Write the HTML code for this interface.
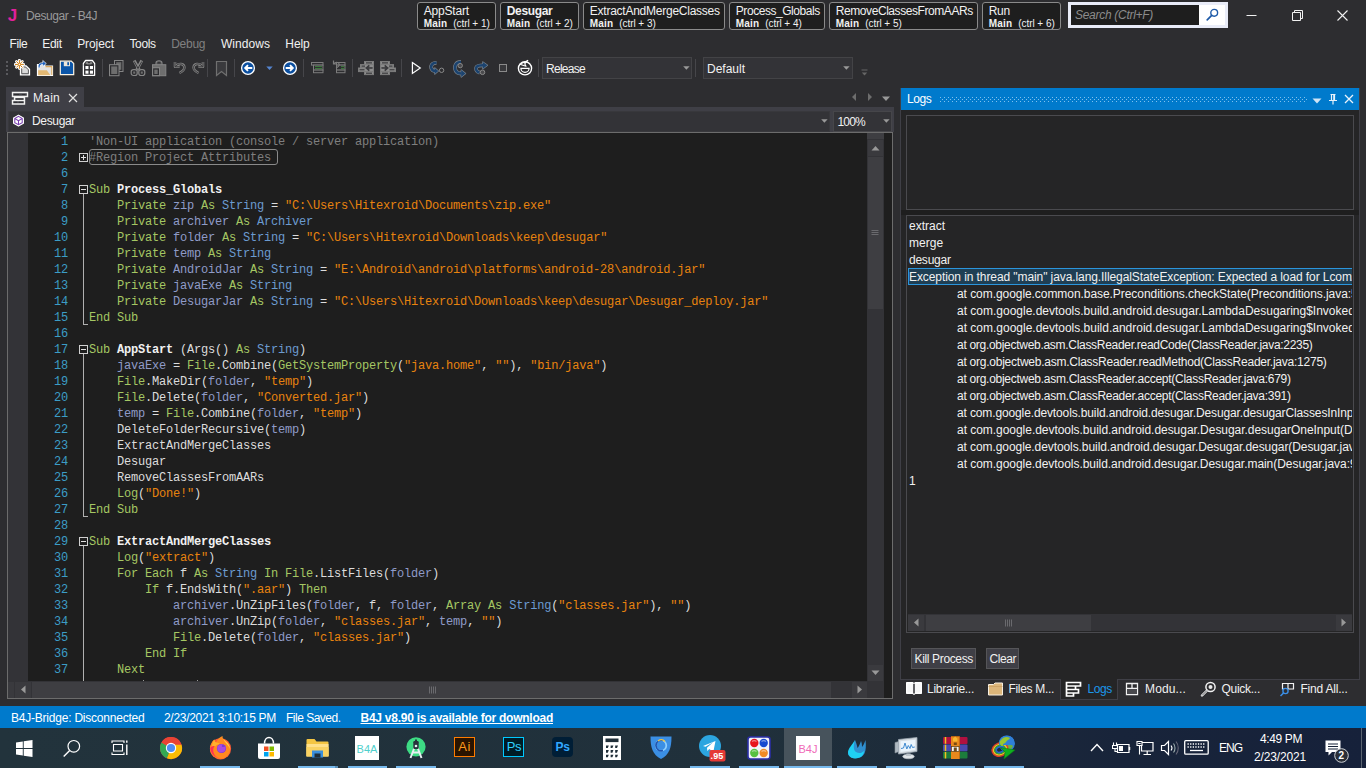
<!DOCTYPE html>
<html><head><meta charset="utf-8"><title>Desugar - B4J</title>
<style>
html,body{margin:0;padding:0;background:#2d2d30;overflow:hidden}
#root{position:relative;width:1366px;height:768px;overflow:hidden;background:#2d2d30;font-family:'Liberation Sans',sans-serif}
.b{position:absolute;display:block}
.t{position:absolute;white-space:pre}
.code{position:absolute;white-space:pre;font:12px/16px 'Liberation Mono',monospace;letter-spacing:-0.2px;color:#dcdcdc}
.k{color:#a5c763}.v{color:#8f9bc8}.ty{color:#6c9bd0}.s{color:#e8830e}.c{color:#7f7f7f}.n{color:#f1f1f1;font-weight:bold}.l{color:#dcdcdc}
.ln{position:absolute;white-space:pre;font:12px/16px 'Liberation Mono',monospace;letter-spacing:-0.2px;color:#3c9dc6;text-align:right}
.lg{position:absolute;white-space:pre;font:12px/17px 'Liberation Sans',sans-serif;color:#f1f1f1;height:17px}
</style></head><body><div id="root">
<div class="t" style="left:7.80px;top:6.50px;height:18px;line-height:18px;font:normal bold 17px/18px 'Liberation Sans', sans-serif;color:#e2219a;letter-spacing:-0.769px;">J</div>
<div class="t" style="left:26.00px;top:7.50px;height:16px;line-height:16px;font:normal normal 12px/16px 'Liberation Sans', sans-serif;color:#999999;letter-spacing:-0.439px;">Desugar - B4J</div>
<div class="b" style="left:417px;top:2px;width:79px;height:28px;background:#1e1e1e;border:1px solid #8a8a8a;box-sizing:border-box;border-radius:3px;"></div>
<div class="t" style="left:423.80px;top:2.50px;height:16px;line-height:16px;font:normal normal 12px/16px 'Liberation Sans', sans-serif;color:#f1f1f1;letter-spacing:-0.213px;">AppStart</div>
<div class="t" style="left:423.80px;top:18.40px;height:12px;line-height:12px;font:normal bold 10px/12px 'Liberation Sans', sans-serif;color:#f1f1f1;letter-spacing:0.155px;">Main</div>
<div class="t" style="left:453.20px;top:18.40px;height:12px;line-height:12px;font:normal normal 10px/12px 'Liberation Sans', sans-serif;color:#f1f1f1;letter-spacing:-0.045px;">(ctrl + 1)</div>
<div class="b" style="left:500px;top:2px;width:79px;height:28px;background:#1e1e1e;border:1px solid #8a8a8a;box-sizing:border-box;border-radius:3px;"></div>
<div class="t" style="left:506.80px;top:2.50px;height:16px;line-height:16px;font:normal bold 12px/16px 'Liberation Sans', sans-serif;color:#f1f1f1;letter-spacing:-0.362px;">Desugar</div>
<div class="t" style="left:506.80px;top:18.40px;height:12px;line-height:12px;font:normal bold 10px/12px 'Liberation Sans', sans-serif;color:#f1f1f1;letter-spacing:0.155px;">Main</div>
<div class="t" style="left:536.20px;top:18.40px;height:12px;line-height:12px;font:normal normal 10px/12px 'Liberation Sans', sans-serif;color:#f1f1f1;letter-spacing:-0.045px;">(ctrl + 2)</div>
<div class="b" style="left:583px;top:2px;width:142px;height:28px;background:#1e1e1e;border:1px solid #8a8a8a;box-sizing:border-box;border-radius:3px;"></div>
<div class="t" style="left:589.80px;top:2.50px;height:16px;line-height:16px;font:normal normal 12px/16px 'Liberation Sans', sans-serif;color:#f1f1f1;letter-spacing:-0.245px;">ExtractAndMergeClasses</div>
<div class="t" style="left:589.80px;top:18.40px;height:12px;line-height:12px;font:normal bold 10px/12px 'Liberation Sans', sans-serif;color:#f1f1f1;letter-spacing:0.155px;">Main</div>
<div class="t" style="left:619.20px;top:18.40px;height:12px;line-height:12px;font:normal normal 10px/12px 'Liberation Sans', sans-serif;color:#f1f1f1;letter-spacing:-0.045px;">(ctrl + 3)</div>
<div class="b" style="left:729px;top:2px;width:96px;height:28px;background:#1e1e1e;border:1px solid #8a8a8a;box-sizing:border-box;border-radius:3px;"></div>
<div class="t" style="left:735.80px;top:2.50px;height:16px;line-height:16px;font:normal normal 12px/16px 'Liberation Sans', sans-serif;color:#f1f1f1;letter-spacing:-0.448px;">Process_Globals</div>
<div class="t" style="left:735.80px;top:18.40px;height:12px;line-height:12px;font:normal bold 10px/12px 'Liberation Sans', sans-serif;color:#f1f1f1;letter-spacing:0.155px;">Main</div>
<div class="t" style="left:765.20px;top:18.40px;height:12px;line-height:12px;font:normal normal 10px/12px 'Liberation Sans', sans-serif;color:#f1f1f1;letter-spacing:-0.045px;">(ctrl + 4)</div>
<div class="b" style="left:829px;top:2px;width:149px;height:28px;background:#1e1e1e;border:1px solid #8a8a8a;box-sizing:border-box;border-radius:3px;"></div>
<div class="t" style="left:835.80px;top:2.50px;height:16px;line-height:16px;font:normal normal 12px/16px 'Liberation Sans', sans-serif;color:#f1f1f1;letter-spacing:-0.431px;">RemoveClassesFromAARs</div>
<div class="t" style="left:835.80px;top:18.40px;height:12px;line-height:12px;font:normal bold 10px/12px 'Liberation Sans', sans-serif;color:#f1f1f1;letter-spacing:0.155px;">Main</div>
<div class="t" style="left:865.20px;top:18.40px;height:12px;line-height:12px;font:normal normal 10px/12px 'Liberation Sans', sans-serif;color:#f1f1f1;letter-spacing:-0.045px;">(ctrl + 5)</div>
<div class="b" style="left:982px;top:2px;width:79px;height:28px;background:#1e1e1e;border:1px solid #8a8a8a;box-sizing:border-box;border-radius:3px;"></div>
<div class="t" style="left:988.80px;top:2.50px;height:16px;line-height:16px;font:normal normal 12px/16px 'Liberation Sans', sans-serif;color:#f1f1f1;letter-spacing:-0.339px;">Run</div>
<div class="t" style="left:988.80px;top:18.40px;height:12px;line-height:12px;font:normal bold 10px/12px 'Liberation Sans', sans-serif;color:#f1f1f1;letter-spacing:0.155px;">Main</div>
<div class="t" style="left:1018.20px;top:18.40px;height:12px;line-height:12px;font:normal normal 10px/12px 'Liberation Sans', sans-serif;color:#f1f1f1;letter-spacing:-0.045px;">(ctrl + 6)</div>
<div class="b" style="left:1068px;top:2px;width:160px;height:26px;background:#e9ecf8;"></div>
<div class="b" style="left:1071px;top:5px;width:128px;height:20px;background:#1e1e1e;"></div>
<div class="b" style="left:1199px;top:5px;width:26px;height:20px;background:#ffffff;"></div>
<div class="t" style="left:1075.00px;top:7.00px;height:16px;line-height:16px;font:italic normal 12px/16px 'Liberation Sans', sans-serif;color:#8c8c8c;letter-spacing:-0.291px;">Search (Ctrl+F)</div>
<svg class="b" style="left:1204px;top:7px" width="16" height="16" viewBox="0 0 16 16"><circle cx="10.2" cy="5.800" r="3.400" fill="none" stroke="#1e5aa8" stroke-width="1.400"/><path d="M7.700 8.300 L3.200 12.800" stroke="#1e5aa8" stroke-width="1.700" stroke-linecap="round"/></svg>
<svg class="b" style="left:1240px;top:4px" width="120" height="24" viewBox="0 0 120 24"><path d="M6.5 11.5h10" stroke="#f1f1f1" stroke-width="1"/><path d="M52.5 8.5h8v8h-8z M54.5 8.5v-2h8v8h-2" fill="none" stroke="#f1f1f1" stroke-width="1"/><path d="M97.5 6.5l10 10M107.5 6.5l-10 10" stroke="#f1f1f1" stroke-width="1.1"/></svg>
<div class="t" style="left:9.50px;top:36.00px;height:16px;line-height:16px;font:normal normal 12px/16px 'Liberation Sans', sans-serif;color:#f1f1f1;letter-spacing:-0.386px;">File</div>
<div class="t" style="left:42.30px;top:36.00px;height:16px;line-height:16px;font:normal normal 12px/16px 'Liberation Sans', sans-serif;color:#f1f1f1;letter-spacing:-0.322px;">Edit</div>
<div class="t" style="left:77.20px;top:36.00px;height:16px;line-height:16px;font:normal normal 12px/16px 'Liberation Sans', sans-serif;color:#f1f1f1;letter-spacing:-0.080px;">Project</div>
<div class="t" style="left:129.40px;top:36.00px;height:16px;line-height:16px;font:normal normal 12px/16px 'Liberation Sans', sans-serif;color:#f1f1f1;letter-spacing:-0.323px;">Tools</div>
<div class="t" style="left:171.20px;top:36.00px;height:16px;line-height:16px;font:normal normal 12px/16px 'Liberation Sans', sans-serif;color:#808080;letter-spacing:-0.255px;">Debug</div>
<div class="t" style="left:221.00px;top:36.00px;height:16px;line-height:16px;font:normal normal 12px/16px 'Liberation Sans', sans-serif;color:#f1f1f1;letter-spacing:0.045px;">Windows</div>
<div class="t" style="left:285.30px;top:36.00px;height:16px;line-height:16px;font:normal normal 12px/16px 'Liberation Sans', sans-serif;color:#f1f1f1;letter-spacing:-0.072px;">Help</div>
<svg class="b" style="left:5px;top:60px" width="4" height="16" viewBox="0 0 4 16"><rect x="1" y="1" width="2" height="2" fill="#5a5a5e"/><rect x="1" y="5" width="2" height="2" fill="#5a5a5e"/><rect x="1" y="9" width="2" height="2" fill="#5a5a5e"/><rect x="1" y="13" width="2" height="2" fill="#5a5a5e"/></svg>
<svg class="b" style="left:14px;top:59px" width="18" height="18" viewBox="0 0 18 18"><path d="M6.500 6.800h5.600l3.400 3.400v5.600h-9z" fill="#d9d9d9" stroke="#ffffff" stroke-width="1.300"/><path d="M7.700 8h3.900l2.800 2.800v3.900h-6.700z" fill="none" stroke="#3a3a3d" stroke-width="0.800"/><path d="M5.400 1.200v8.400M1.200 5.400h8.400M2.500 2.500l5.800 5.800M8.300 2.500l-5.800 5.800" stroke="#ffffff" stroke-width="2.800" stroke-linecap="round"/><path d="M5.400 1v8.800M1 5.400h8.800M2.300 2.300l6.200 6.200M8.500 2.300l-6.200 6.200" stroke="#cf7f14" stroke-width="1"/><circle cx="5.400" cy="5.400" r="1.200" fill="#ffffff" stroke="#cf7f14" stroke-width="0.800"/></svg>
<svg class="b" style="left:36px;top:59px" width="18" height="18" viewBox="0 0 18 18"><path d="M1.500 5.500h6l1.500 1.500h7.500v9.300h-15z" fill="#e2e2e2" stroke="#ffffff" stroke-width="1.200"/><path d="M9.500 7.600h6.300v8.500" fill="none" stroke="#dba95c" stroke-width="1.100"/><path d="M2.200 16.200v-5h8.600l3.700 5z" fill="#e3b873"/><path d="M2.600 9.200C1.200 6.200 3 3.500 6.800 3.800V1.500l3.500 3-3.500 3V5.600C4.800 5.300 3.600 6.500 4.200 8.600z" fill="#1a5fbf" stroke="#ffffff" stroke-width="0.700"/></svg>
<svg class="b" style="left:59px;top:60px" width="16" height="16" viewBox="0 0 16 16"><path d="M1.300 1.200h11l2.400 2.400v11h-13.400z" fill="#0b55a8" stroke="#fbf3e4" stroke-width="1.200"/><rect x="4.800" y="1.600" width="6.200" height="4.600" fill="#ece6da"/><rect x="8.300" y="2.200" width="1.700" height="3" fill="#0b55a8"/></svg>
<svg class="b" style="left:82px;top:59px" width="14" height="18" viewBox="0 0 14 18"><path d="M1.400 16.300v-12l2.200-2.800h6.800l2.200 2.800v12z" fill="#2d2d30" stroke="#ffffff" stroke-width="1.300" stroke-linejoin="round"/><path d="M7 5.200C5.500 2.500 3.500 2.800 4 4.500 4.300 5.300 5.800 5.400 7 5.200C8.500 2.500 10.500 2.800 10 4.500 9.700 5.300 8.200 5.400 7 5.200z" fill="#8f8f8f" stroke="#8f8f8f" stroke-width="0.600"/><path d="M1.500 6h11" stroke="#3a3a3d" stroke-width="0.600"/><g fill="#ffffff"><rect x="3.400" y="7" width="3.100" height="3.100"/><rect x="7.900" y="7" width="3.100" height="3.100"/><rect x="3.400" y="11.600" width="3.100" height="3.100"/><rect x="7.900" y="11.600" width="3.100" height="3.100"/></g></svg>
<div class="b" style="left:102px;top:59px;width:1px;height:18px;background:#46464a;"></div>
<svg class="b" style="left:108px;top:59px" width="16" height="18" viewBox="0 0 16 18"><rect x="6.500" y="1.500" width="8.500" height="11" fill="#2d2d30" stroke="#858585" stroke-width="1"/><rect x="8.200" y="3.200" width="5.100" height="7.600" fill="#6e6e6e"/><rect x="1.500" y="5.700" width="9.500" height="11" fill="#2d2d30" stroke="#858585" stroke-width="1"/><rect x="3.200" y="7.400" width="6.100" height="7.600" fill="#6e6e6e"/></svg>
<svg class="b" style="left:130px;top:59px" width="16" height="18" viewBox="0 0 16 18"><path d="M4.200 1.500L9.300 11M11.800 1.500L6.700 11" stroke="#858585" stroke-width="3" stroke-linecap="butt"/><path d="M4.200 2.500L9 11M11.800 2.500L7 11" stroke="#2d2d30" stroke-width="0.900"/><rect x="1.200" y="10.600" width="6" height="5.900" rx="2.200" fill="#2d2d30" stroke="#858585" stroke-width="1.200"/><rect x="8.800" y="10.600" width="6" height="5.900" rx="2.200" fill="#2d2d30" stroke="#858585" stroke-width="1.200"/><rect x="3.200" y="12.500" width="2" height="2.200" fill="#6e6e6e"/><rect x="10.800" y="12.500" width="2" height="2.200" fill="#6e6e6e"/><rect x="7.200" y="9.500" width="1.600" height="1.600" fill="#858585"/></svg>
<svg class="b" style="left:151px;top:59px" width="16" height="18" viewBox="0 0 16 18"><path d="M5 6V4Q5 1.700 8 1.700Q11 1.700 11 4V6" fill="#4a4a4c" stroke="#858585" stroke-width="1.100"/><rect x="1.500" y="5.700" width="13.300" height="11" fill="#6e6e6e" stroke="#858585" stroke-width="1"/><rect x="2.200" y="9.200" width="6.300" height="7" fill="#2d2d30"/><rect x="1.500" y="8.700" width="7" height="8" fill="none" stroke="#858585" stroke-width="1"/><rect x="3.300" y="10.600" width="3.400" height="4.400" fill="#6e6e6e"/><rect x="7.300" y="3" width="1.400" height="1.400" fill="#2d2d30"/></svg>
<svg class="b" style="left:173px;top:61px" width="14" height="14" viewBox="0 0 14 14"><path d="M2 1v4.800h4.600M2.600 5.300C5.800 1.400 11.400 2.600 11.400 6.600c0 2.900-2.600 4.200-5 5.400" fill="none" stroke="#858585" stroke-width="2.500" stroke-linejoin="round"/><path d="M2 1v4.800h4.600M2.600 5.300C5.800 1.400 11.400 2.600 11.400 6.600c0 2.900-2.600 4.200-5 5.400" fill="none" stroke="#2d2d30" stroke-width="0.900"/></svg>
<svg class="b" style="left:191px;top:61px" width="14" height="14" viewBox="0 0 14 14"><path d="M12 1v4.800H7.400M11.400 5.300C8.200 1.400 2.600 2.600 2.600 6.600c0 2.900 2.600 4.200 5 5.400" fill="none" stroke="#858585" stroke-width="2.500" stroke-linejoin="round"/><path d="M12 1v4.800H7.400M11.400 5.300C8.200 1.400 2.600 2.600 2.600 6.600c0 2.900 2.600 4.200 5 5.400" fill="none" stroke="#2d2d30" stroke-width="0.900"/></svg>
<div class="b" style="left:207px;top:59px;width:1px;height:18px;background:#46464a;"></div>
<svg class="b" style="left:215px;top:60px" width="14" height="17" viewBox="0 0 14 17"><path d="M1.5 1.5h10v14l-5-4-5 4z" fill="#3a3a3d" stroke="#707070" stroke-width="1.2"/></svg>
<div class="b" style="left:234px;top:59px;width:1px;height:18px;background:#46464a;"></div>
<svg class="b" style="left:240px;top:60px" width="16" height="16" viewBox="0 0 16 16"><circle cx="8" cy="8" r="6.400" fill="#0b4fa0" stroke="#ffffff" stroke-width="1.300"/><path d="M12.300 8H5.500M8 5.200L5.200 8l2.800 2.800" fill="none" stroke="#fff" stroke-width="1.900"/></svg>
<svg class="b" style="left:266px;top:65.5px" width="7" height="5" viewBox="0 0 7 5"><path d="M0.300 0.500h6.400l-3.200 3.600z" fill="#5585d0"/></svg>
<svg class="b" style="left:282px;top:60px" width="16" height="16" viewBox="0 0 16 16"><circle cx="8" cy="8" r="6.400" fill="#0b4fa0" stroke="#ffffff" stroke-width="1.300"/><path d="M3.700 8h6.800M8 5.200L10.800 8 8 10.800" fill="none" stroke="#fff" stroke-width="1.900"/></svg>
<div class="b" style="left:303px;top:59px;width:1px;height:18px;background:#46464a;"></div>
<svg class="b" style="left:310px;top:61px" width="14" height="13" viewBox="0 0 14 13"><g fill="#2d2d30" stroke="#7c7c7c" stroke-width="1"><rect x="1.500" y="1.500" width="11.500" height="2.600"/><rect x="3.500" y="4.100" width="9.500" height="5"/><rect x="3.500" y="9.100" width="9.500" height="2.600"/></g><path d="M5 5.600h7M5 7.600h7" stroke="#3f7f3f" stroke-width="1"/></svg>
<svg class="b" style="left:332px;top:60px" width="14" height="14" viewBox="0 0 14 14"><g fill="#2d2d30" stroke="#7c7c7c" stroke-width="1"><rect x="4.500" y="2.500" width="8.500" height="2.600"/><rect x="4.500" y="5.100" width="8.500" height="5"/><rect x="4.500" y="10.100" width="8.500" height="2.600"/></g><path d="M9 6.600h3.500M9 8.600h3.500" stroke="#3f7f3f" stroke-width="1"/><path d="M1.500 0.500v3.500h3.500M1.800 3.800c2-2.300 5.500-1.500 5.500 1 0 1.600-1.600 2.400-3.300 3.400" fill="none" stroke="#7c7c7c" stroke-width="1.200"/></svg>
<div class="b" style="left:352px;top:59px;width:1px;height:18px;background:#46464a;"></div>
<svg class="b" style="left:357px;top:60px" width="18" height="16" viewBox="0 0 18 16"><g fill="#8c8c8c" stroke="#7c7c7c" stroke-width="1"><rect x="7.500" y="1.500" width="9" height="2.800"/><rect x="3.500" y="4.600" width="13" height="3"/><rect x="1.500" y="8" width="15" height="3.600"/><rect x="7.500" y="11.800" width="9" height="2.800"/></g><path d="M9 2.900h6M4.500 6.100h3.500M2.500 9.800h5M9 13.200h6" stroke="#2d2d30" stroke-width="1"/><path d="M15.500 8H10M12.300 5.300L9.500 8l2.800 2.700" fill="none" stroke="#3a3a3d" stroke-width="1.700"/></svg>
<svg class="b" style="left:379px;top:60px" width="18" height="16" viewBox="0 0 18 16"><g fill="#8c8c8c" stroke="#7c7c7c" stroke-width="1"><rect x="1.500" y="1.500" width="9" height="2.800"/><rect x="1.500" y="4.600" width="13" height="3"/><rect x="1.500" y="8" width="15" height="3.600"/><rect x="1.500" y="11.800" width="9" height="2.800"/></g><path d="M3 2.900h6M10 6.100h3.500M10.500 9.800h5M3 13.200h6" stroke="#2d2d30" stroke-width="1"/><path d="M2.500 8H8M5.700 5.300L8.500 8l-2.800 2.700" fill="none" stroke="#3a3a3d" stroke-width="1.700"/></svg>
<div class="b" style="left:401px;top:59px;width:1px;height:18px;background:#46464a;"></div>
<svg class="b" style="left:411px;top:61px" width="12" height="14" viewBox="0 0 12 14"><path d="M1.400 1.600L9.300 7 1.400 12.400z" fill="#3a3a3d" stroke="#ffffff" stroke-width="1.200" stroke-linejoin="miter"/></svg>
<svg class="b" style="left:428px;top:60px" width="18" height="16" viewBox="0 0 18 16"><path d="M8.500 2.800C3.500 2.800 2.800 6 3.200 7.800C3.800 10.200 5.500 11 7.200 11" fill="none" stroke="#7b848c" stroke-width="3.800"/><path d="M6.800 7.900L10.300 11 6.800 14.100z" fill="#7b848c" stroke="#7b848c" stroke-width="1.200" stroke-linejoin="round"/><path d="M8.500 2.800C3.500 2.800 2.800 6 3.200 7.800C3.800 10.200 5.500 11 7.200 11" fill="none" stroke="#1b436f" stroke-width="2.600"/><path d="M6.800 7.900L10.300 11 6.800 14.100z" fill="#1b436f"/><circle cx="13.600" cy="10.300" r="2.200" fill="#2d2d30" stroke="#8a8a8a" stroke-width="1"/></svg>
<svg class="b" style="left:452px;top:59px" width="16" height="19" viewBox="0 0 16 19"><path d="M9 3C3.500 3 2.800 7 3 9.500C3.500 13 6.500 14.500 9.500 14.500" fill="none" stroke="#7b848c" stroke-width="3.800"/><path d="M9.200 11L13.600 14.500 9.200 18z" fill="#7b848c" stroke="#7b848c" stroke-width="1.200" stroke-linejoin="round"/><path d="M9 3C3.500 3 2.800 7 3 9.500C3.500 13 6.500 14.500 9.500 14.500" fill="none" stroke="#1b436f" stroke-width="2.600"/><path d="M9.200 11L13.600 14.500 9.200 18z" fill="#1b436f"/><circle cx="8.200" cy="6.600" r="2.200" fill="#4a4a4d" stroke="#8a8a8a" stroke-width="1"/></svg>
<svg class="b" style="left:473px;top:60px" width="17" height="17" viewBox="0 0 17 17"><path d="M6.500 12.500C3 12 2.500 8.500 3.500 7C4.500 5.500 7 5.300 10 5.300" fill="none" stroke="#7b848c" stroke-width="3.800"/><path d="M9.800 1.900L14.500 5.300 9.800 8.700z" fill="#7b848c" stroke="#7b848c" stroke-width="1.200" stroke-linejoin="round"/><path d="M6.500 12.500C3 12 2.500 8.500 3.500 7C4.500 5.500 7 5.300 10 5.300" fill="none" stroke="#1b436f" stroke-width="2.600"/><path d="M9.800 1.900L14.500 5.300 9.800 8.700z" fill="#1b436f"/><circle cx="9.500" cy="12.300" r="2.300" fill="#4a4a4d" stroke="#8a8a8a" stroke-width="1"/></svg>
<div class="b" style="left:499px;top:64px;width:8px;height:8px;background:#38383b;border:1px solid #8a8a8a;box-sizing:border-box;"></div>
<svg class="b" style="left:516px;top:58.4px" width="18" height="19" viewBox="0 0 18 19"><circle cx="9" cy="10.300" r="6.600" fill="none" stroke="#ffffff" stroke-width="1.400"/><path d="M4.900 10.300h8.200a4.100 4.100 0 0 1-8.200 0z" fill="#2d2d30" stroke="#ffffff" stroke-width="1.200"/><path d="M11.800 2.400L3.800 6.200l6.200 2.100-1.300-2.500z" fill="#3a3a3d" stroke="#ffffff" stroke-width="1.100" stroke-linejoin="round"/></svg>
<div class="b" style="left:538px;top:59px;width:1px;height:18px;background:#46464a;"></div>
<div class="b" style="left:542px;top:57px;width:150px;height:22px;background:#333337;border:1px solid #434346;box-sizing:border-box;"></div>
<div class="t" style="left:546.00px;top:61.30px;height:16px;line-height:16px;font:normal normal 12px/16px 'Liberation Sans', sans-serif;color:#f1f1f1;letter-spacing:-0.719px;">Release</div>
<svg class="b" style="left:683px;top:66px" width="7" height="4" viewBox="0 0 7 4"><path d="M0.200 0.200h6.400l-3.200 3.600z" fill="#999"/></svg>
<div class="b" style="left:695px;top:59px;width:1px;height:18px;background:#46464a;"></div>
<div class="b" style="left:703px;top:57px;width:150px;height:22px;background:#333337;border:1px solid #434346;box-sizing:border-box;"></div>
<div class="t" style="left:707.00px;top:61.30px;height:16px;line-height:16px;font:normal normal 12px/16px 'Liberation Sans', sans-serif;color:#f1f1f1;letter-spacing:-0.004px;">Default</div>
<svg class="b" style="left:843px;top:66px" width="7" height="4" viewBox="0 0 7 4"><path d="M0.200 0.200h6.400l-3.200 3.600z" fill="#999"/></svg>
<svg class="b" style="left:861px;top:69px" width="7" height="7" viewBox="0 0 7 7"><path d="M0.500 1h6" stroke="#666" stroke-width="1"/><path d="M0.800 3.500h5.400l-2.700 3z" fill="#666"/></svg>
<div class="b" style="left:6px;top:87px;width:78px;height:21px;background:#3f3f46;"></div>
<div class="b" style="left:6px;top:107px;width:888px;height:25px;background:#3f3f46;"></div>
<div class="b" style="left:894px;top:107px;width:0px;height:0px;"></div>
<div class="t" style="left:33.00px;top:89.50px;height:16px;line-height:16px;font:normal normal 12px/16px 'Liberation Sans', sans-serif;color:#f1f1f1;letter-spacing:0.246px;">Main</div>
<svg class="b" style="left:11px;top:91px" width="18" height="14" viewBox="0 0 18 14"><path d="M1.5 1.5h15v4h-15z M3.5 5.5v3 M3.5 6.5h10v3h-10z M1.5 9.5h12v3.5h-12z" fill="none" stroke="#f1f1f1" stroke-width="1.4"/><path d="M3 3.5h5 M11 3.5h3 M5 8h7 M3 11.3h3 M8 11.3h4" stroke="#2d2d30" stroke-width="1"/></svg>
<svg class="b" style="left:68px;top:93px" width="10" height="10" viewBox="0 0 10 10"><path d="M1 1l8 8M9 1l-8 8" stroke="#e0e0e0" stroke-width="1.2"/></svg>
<svg class="b" style="left:850px;top:91px" width="42" height="12" viewBox="0 0 42 12"><path d="M6 2v8l-4-4z" fill="#6d6d6d"/><path d="M18 2v8l4-4z" fill="#6d6d6d"/><path d="M32 5.5h8l-4 4.5z" fill="#999"/></svg>
<div class="b" style="left:8px;top:111px;width:822px;height:21px;background:#333337;border:1px solid #38383c;box-sizing:border-box;"></div>
<div class="b" style="left:833px;top:111px;width:59px;height:21px;background:#333337;border:1px solid #46464a;box-sizing:border-box;"></div>
<div class="t" style="left:32.00px;top:113.00px;height:16px;line-height:16px;font:normal normal 12px/16px 'Liberation Sans', sans-serif;color:#f1f1f1;letter-spacing:-0.337px;">Desugar</div>
<svg class="b" style="left:12px;top:114.3px" width="13" height="13" viewBox="0 0 14 14"><path d="M7 1.2l5.3 3v5.8L7 13l-5.3-3V4.2z" fill="#ffffff" stroke="#ffffff" stroke-width="1.2" stroke-linejoin="round"/><path d="M7 2.6l4 2.3v4.4L7 11.6 3 9.3V4.9z M7 7.2v4.2 M7 7.2L3.2 5 M7 7.2L10.8 5" fill="none" stroke="#7a3fb0" stroke-width="1.1"/></svg>
<svg class="b" style="left:821px;top:119px" width="7" height="4" viewBox="0 0 7 4"><path d="M0.200 0.200h6.400l-3.200 3.600z" fill="#999"/></svg>
<svg class="b" style="left:883px;top:119px" width="7" height="4" viewBox="0 0 7 4"><path d="M0.200 0.200h6.400l-3.200 3.600z" fill="#999"/></svg>
<div class="t" style="left:837.50px;top:114.20px;height:16px;line-height:16px;font:normal normal 12px/16px 'Liberation Sans', sans-serif;color:#f1f1f1;letter-spacing:-0.801px;">100%</div>
<div class="b" style="left:7px;top:132px;width:886px;height:567px;background:#1e1e1e;border:1px solid #6c6c6c;box-sizing:border-box;"></div>
<div class="b" style="left:8px;top:133px;width:20px;height:548px;background:#333337;"></div>
<div class="b" style="left:867px;top:133px;width:17px;height:548px;background:#333337;"></div>
<div class="b" style="left:867px;top:133px;width:17px;height:6px;background:#3e3e42;"></div>
<div class="b" style="left:868px;top:140px;width:15px;height:16px;background:#3a3a3e;"></div>
<svg class="b" style="left:871px;top:145px" width="10" height="6" viewBox="0 0 10 6"><path d="M0.500 5.500h8l-4-4.500z" fill="#999"/></svg>
<div class="b" style="left:868px;top:157px;width:15px;height:152px;background:#3e3e42;"></div>
<svg class="b" style="left:871px;top:229px" width="9" height="8" viewBox="0 0 9 8"><path d="M0.500 1.500h7M0.500 3.500h7M0.500 5.500h7" stroke="#6a6a6e" stroke-width="1"/></svg>
<div class="b" style="left:868px;top:665px;width:15px;height:16px;background:#3a3a3e;"></div>
<svg class="b" style="left:871px;top:670px" width="10" height="6" viewBox="0 0 10 6"><path d="M0.500 0.500h8l-4 4.500z" fill="#999"/></svg>
<div class="b" style="left:8px;top:681px;width:876px;height:17px;background:#333337;"></div>
<div class="b" style="left:8px;top:682px;width:6px;height:16px;background:#3a3a3e;"></div>
<div class="b" style="left:15px;top:682px;width:16px;height:16px;background:#3a3a3e;"></div>
<svg class="b" style="left:20px;top:685px" width="6" height="10" viewBox="0 0 6 10"><path d="M5.500 0.500v8l-4.500-4z" fill="#999"/></svg>
<div class="b" style="left:32px;top:682px;width:799px;height:16px;background:#3e3e42;"></div>
<svg class="b" style="left:428px;top:686px" width="9" height="8" viewBox="0 0 9 8"><path d="M1.500 0.500v7M3.500 0.500v7M5.500 0.500v7M7.500 0.500v7" stroke="#6a6a6e" stroke-width="1"/></svg>
<div class="b" style="left:852px;top:682px;width:15px;height:16px;background:#3a3a3e;"></div>
<svg class="b" style="left:857px;top:685px" width="6" height="10" viewBox="0 0 6 10"><path d="M0.500 0.500v8l4.500-4z" fill="#999"/></svg>
<div class="b" style="left:8px;top:133px;width:859px;height:548px;overflow:hidden;"><div class="ln" style="left:0;width:60px;top:1px">1</div><div class="code" style="left:81px;top:1px"><span class="c">'Non-UI application (console / server application)</span></div><div class="ln" style="left:0;width:60px;top:17px">2</div><div class="code" style="left:81px;top:17px"><span class="c">#Region Project Attributes </span></div><div class="ln" style="left:0;width:60px;top:33px">6</div><div class="ln" style="left:0;width:60px;top:49px">7</div><div class="code" style="left:81px;top:49px"><span class="k">Sub </span><span class="n">Process_Globals</span></div><div class="ln" style="left:0;width:60px;top:65px">8</div><div class="code" style="left:81px;top:65px"><span class="k">    Private </span><span class="v">zip </span><span class="k">As </span><span class="ty">String </span><span class="l">= </span><span class="s">"C:\Users\Hitexroid\Documents\zip.exe"</span></div><div class="ln" style="left:0;width:60px;top:81px">9</div><div class="code" style="left:81px;top:81px"><span class="k">    Private </span><span class="v">archiver </span><span class="k">As </span><span class="ty">Archiver</span></div><div class="ln" style="left:0;width:60px;top:97px">10</div><div class="code" style="left:81px;top:97px"><span class="k">    Private </span><span class="v">folder </span><span class="k">As </span><span class="ty">String </span><span class="l">= </span><span class="s">"C:\Users\Hitexroid\Downloads\keep\desugar"</span></div><div class="ln" style="left:0;width:60px;top:113px">11</div><div class="code" style="left:81px;top:113px"><span class="k">    Private </span><span class="v">temp </span><span class="k">As </span><span class="ty">String</span></div><div class="ln" style="left:0;width:60px;top:129px">12</div><div class="code" style="left:81px;top:129px"><span class="k">    Private </span><span class="v">AndroidJar </span><span class="k">As </span><span class="ty">String </span><span class="l">= </span><span class="s">"E:\Android\android\platforms\android-28\android.jar"</span></div><div class="ln" style="left:0;width:60px;top:145px">13</div><div class="code" style="left:81px;top:145px"><span class="k">    Private </span><span class="v">javaExe </span><span class="k">As </span><span class="ty">String</span></div><div class="ln" style="left:0;width:60px;top:161px">14</div><div class="code" style="left:81px;top:161px"><span class="k">    Private </span><span class="v">DesugarJar </span><span class="k">As </span><span class="ty">String </span><span class="l">= </span><span class="s">"C:\Users\Hitexroid\Downloads\keep\desugar\Desugar_deploy.jar"</span></div><div class="ln" style="left:0;width:60px;top:177px">15</div><div class="code" style="left:81px;top:177px"><span class="k">End Sub</span></div><div class="ln" style="left:0;width:60px;top:193px">16</div><div class="ln" style="left:0;width:60px;top:209px">17</div><div class="code" style="left:81px;top:209px"><span class="k">Sub </span><span class="n">AppStart </span><span class="l">(Args() </span><span class="k">As </span><span class="ty">String</span><span class="l">)</span></div><div class="ln" style="left:0;width:60px;top:225px">18</div><div class="code" style="left:81px;top:225px"><span class="v">    javaExe </span><span class="l">= </span><span class="k">File</span><span class="l">.Combine(</span><span class="k">GetSystemProperty</span><span class="l">(</span><span class="s">"java.home"</span><span class="l">, </span><span class="s">""</span><span class="l">), </span><span class="s">"bin/java"</span><span class="l">)</span></div><div class="ln" style="left:0;width:60px;top:241px">19</div><div class="code" style="left:81px;top:241px"><span class="k">    File</span><span class="l">.MakeDir(</span><span class="v">folder</span><span class="l">, </span><span class="s">"temp"</span><span class="l">)</span></div><div class="ln" style="left:0;width:60px;top:257px">20</div><div class="code" style="left:81px;top:257px"><span class="k">    File</span><span class="l">.Delete(</span><span class="v">folder</span><span class="l">, </span><span class="s">"Converted.jar"</span><span class="l">)</span></div><div class="ln" style="left:0;width:60px;top:273px">21</div><div class="code" style="left:81px;top:273px"><span class="v">    temp </span><span class="l">= </span><span class="k">File</span><span class="l">.Combine(</span><span class="v">folder</span><span class="l">, </span><span class="s">"temp"</span><span class="l">)</span></div><div class="ln" style="left:0;width:60px;top:289px">22</div><div class="code" style="left:81px;top:289px"><span class="l">    DeleteFolderRecursive(</span><span class="v">temp</span><span class="l">)</span></div><div class="ln" style="left:0;width:60px;top:305px">23</div><div class="code" style="left:81px;top:305px"><span class="l">    ExtractAndMergeClasses</span></div><div class="ln" style="left:0;width:60px;top:321px">24</div><div class="code" style="left:81px;top:321px"><span class="l">    Desugar</span></div><div class="ln" style="left:0;width:60px;top:337px">25</div><div class="code" style="left:81px;top:337px"><span class="l">    RemoveClassesFromAARs</span></div><div class="ln" style="left:0;width:60px;top:353px">26</div><div class="code" style="left:81px;top:353px"><span class="k">    Log</span><span class="l">(</span><span class="s">"Done!"</span><span class="l">)</span></div><div class="ln" style="left:0;width:60px;top:369px">27</div><div class="code" style="left:81px;top:369px"><span class="k">End Sub</span></div><div class="ln" style="left:0;width:60px;top:385px">28</div><div class="ln" style="left:0;width:60px;top:401px">29</div><div class="code" style="left:81px;top:401px"><span class="k">Sub </span><span class="n">ExtractAndMergeClasses</span></div><div class="ln" style="left:0;width:60px;top:417px">30</div><div class="code" style="left:81px;top:417px"><span class="k">    Log</span><span class="l">(</span><span class="s">"extract"</span><span class="l">)</span></div><div class="ln" style="left:0;width:60px;top:433px">31</div><div class="code" style="left:81px;top:433px"><span class="k">    For Each </span><span class="l">f </span><span class="k">As </span><span class="ty">String </span><span class="k">In File</span><span class="l">.ListFiles(</span><span class="v">folder</span><span class="l">)</span></div><div class="ln" style="left:0;width:60px;top:449px">32</div><div class="code" style="left:81px;top:449px"><span class="k">        If </span><span class="l">f.EndsWith(</span><span class="s">".aar"</span><span class="l">) </span><span class="k">Then</span></div><div class="ln" style="left:0;width:60px;top:465px">33</div><div class="code" style="left:81px;top:465px"><span class="v">            archiver</span><span class="l">.UnZipFiles(</span><span class="v">folder</span><span class="l">, f, </span><span class="v">folder</span><span class="l">, </span><span class="k">Array As </span><span class="ty">String</span><span class="l">(</span><span class="s">"classes.jar"</span><span class="l">), </span><span class="s">""</span><span class="l">)</span></div><div class="ln" style="left:0;width:60px;top:481px">34</div><div class="code" style="left:81px;top:481px"><span class="v">            archiver</span><span class="l">.UnZip(</span><span class="v">folder</span><span class="l">, </span><span class="s">"classes.jar"</span><span class="l">, </span><span class="v">temp</span><span class="l">, </span><span class="s">""</span><span class="l">)</span></div><div class="ln" style="left:0;width:60px;top:497px">35</div><div class="code" style="left:81px;top:497px"><span class="k">            File</span><span class="l">.Delete(</span><span class="v">folder</span><span class="l">, </span><span class="s">"classes.jar"</span><span class="l">)</span></div><div class="ln" style="left:0;width:60px;top:513px">36</div><div class="code" style="left:81px;top:513px"><span class="k">        End If</span></div><div class="ln" style="left:0;width:60px;top:529px">37</div><div class="code" style="left:81px;top:529px"><span class="k">    Next</span></div><div class="ln" style="left:0;width:60px;top:546px">38</div><div class="code" style="left:81px;top:546px"><span class="k">    Log</span><span class="l">(</span><span class="s">"merge"</span><span class="l">)</span></div><div class="b" style="left:81px;top:16px;width:189px;height:16px;border:1px solid #8a8a8a;box-sizing:border-box;border-radius:3px"></div><svg class="b" style="left:71px;top:20px" width="9" height="9"><rect x="0.500" y="0.500" width="8" height="8" fill="#1e1e1e" stroke="#d0d0d0"/><path d="M2 4.500h5" stroke="#e0e0e0" stroke-width="1"/><path d="M4.500 2v5" stroke="#e0e0e0" stroke-width="1"/></svg><svg class="b" style="left:71px;top:52px" width="9" height="9"><rect x="0.500" y="0.500" width="8" height="8" fill="#1e1e1e" stroke="#d0d0d0"/><path d="M2 4.500h5" stroke="#e0e0e0" stroke-width="1"/></svg><div class="b" style="left:75px;top:61px;width:1px;height:130px;background:#b0b0b0"></div><div class="b" style="left:75px;top:191px;width:5px;height:1px;background:#b0b0b0"></div><svg class="b" style="left:71px;top:212px" width="9" height="9"><rect x="0.500" y="0.500" width="8" height="8" fill="#1e1e1e" stroke="#d0d0d0"/><path d="M2 4.500h5" stroke="#e0e0e0" stroke-width="1"/></svg><div class="b" style="left:75px;top:221px;width:1px;height:162px;background:#b0b0b0"></div><div class="b" style="left:75px;top:383px;width:5px;height:1px;background:#b0b0b0"></div><svg class="b" style="left:71px;top:404px" width="9" height="9"><rect x="0.500" y="0.500" width="8" height="8" fill="#1e1e1e" stroke="#d0d0d0"/><path d="M2 4.500h5" stroke="#e0e0e0" stroke-width="1"/></svg><div class="b" style="left:75px;top:413px;width:1px;height:135px;background:#b0b0b0"></div><div class="b" style="left:135px;top:547px;width:1px;height:1px;background:#9a9a9a"></div><div class="b" style="left:189px;top:547px;width:1px;height:1px;background:#9a9a9a"></div></div>
<div class="b" style="left:900px;top:88px;width:1px;height:592px;background:#3f3f46;"></div>
<div class="b" style="left:1359px;top:88px;width:1px;height:592px;background:#3f3f46;"></div>
<div class="b" style="left:901px;top:110px;width:458px;height:569px;background:#252526;"></div>
<div class="b" style="left:901px;top:88px;width:458px;height:22px;background:#007acc;"></div>
<div class="t" style="left:907.00px;top:91.00px;height:16px;line-height:16px;font:normal normal 12px/16px 'Liberation Sans', sans-serif;color:#ffffff;letter-spacing:-0.383px;">Logs</div>
<svg class="b" style="left:940px;top:97px" width="370" height="5" viewBox="0 0 370 5"><g fill="#7fc0ee"><rect x="0" y="0" width="1" height="1"/><rect x="0" y="4" width="1" height="1"/><rect x="2" y="2" width="1" height="1"/><rect x="4" y="0" width="1" height="1"/><rect x="4" y="4" width="1" height="1"/><rect x="6" y="2" width="1" height="1"/><rect x="8" y="0" width="1" height="1"/><rect x="8" y="4" width="1" height="1"/><rect x="10" y="2" width="1" height="1"/><rect x="12" y="0" width="1" height="1"/><rect x="12" y="4" width="1" height="1"/><rect x="14" y="2" width="1" height="1"/><rect x="16" y="0" width="1" height="1"/><rect x="16" y="4" width="1" height="1"/><rect x="18" y="2" width="1" height="1"/><rect x="20" y="0" width="1" height="1"/><rect x="20" y="4" width="1" height="1"/><rect x="22" y="2" width="1" height="1"/><rect x="24" y="0" width="1" height="1"/><rect x="24" y="4" width="1" height="1"/><rect x="26" y="2" width="1" height="1"/><rect x="28" y="0" width="1" height="1"/><rect x="28" y="4" width="1" height="1"/><rect x="30" y="2" width="1" height="1"/><rect x="32" y="0" width="1" height="1"/><rect x="32" y="4" width="1" height="1"/><rect x="34" y="2" width="1" height="1"/><rect x="36" y="0" width="1" height="1"/><rect x="36" y="4" width="1" height="1"/><rect x="38" y="2" width="1" height="1"/><rect x="40" y="0" width="1" height="1"/><rect x="40" y="4" width="1" height="1"/><rect x="42" y="2" width="1" height="1"/><rect x="44" y="0" width="1" height="1"/><rect x="44" y="4" width="1" height="1"/><rect x="46" y="2" width="1" height="1"/><rect x="48" y="0" width="1" height="1"/><rect x="48" y="4" width="1" height="1"/><rect x="50" y="2" width="1" height="1"/><rect x="52" y="0" width="1" height="1"/><rect x="52" y="4" width="1" height="1"/><rect x="54" y="2" width="1" height="1"/><rect x="56" y="0" width="1" height="1"/><rect x="56" y="4" width="1" height="1"/><rect x="58" y="2" width="1" height="1"/><rect x="60" y="0" width="1" height="1"/><rect x="60" y="4" width="1" height="1"/><rect x="62" y="2" width="1" height="1"/><rect x="64" y="0" width="1" height="1"/><rect x="64" y="4" width="1" height="1"/><rect x="66" y="2" width="1" height="1"/><rect x="68" y="0" width="1" height="1"/><rect x="68" y="4" width="1" height="1"/><rect x="70" y="2" width="1" height="1"/><rect x="72" y="0" width="1" height="1"/><rect x="72" y="4" width="1" height="1"/><rect x="74" y="2" width="1" height="1"/><rect x="76" y="0" width="1" height="1"/><rect x="76" y="4" width="1" height="1"/><rect x="78" y="2" width="1" height="1"/><rect x="80" y="0" width="1" height="1"/><rect x="80" y="4" width="1" height="1"/><rect x="82" y="2" width="1" height="1"/><rect x="84" y="0" width="1" height="1"/><rect x="84" y="4" width="1" height="1"/><rect x="86" y="2" width="1" height="1"/><rect x="88" y="0" width="1" height="1"/><rect x="88" y="4" width="1" height="1"/><rect x="90" y="2" width="1" height="1"/><rect x="92" y="0" width="1" height="1"/><rect x="92" y="4" width="1" height="1"/><rect x="94" y="2" width="1" height="1"/><rect x="96" y="0" width="1" height="1"/><rect x="96" y="4" width="1" height="1"/><rect x="98" y="2" width="1" height="1"/><rect x="100" y="0" width="1" height="1"/><rect x="100" y="4" width="1" height="1"/><rect x="102" y="2" width="1" height="1"/><rect x="104" y="0" width="1" height="1"/><rect x="104" y="4" width="1" height="1"/><rect x="106" y="2" width="1" height="1"/><rect x="108" y="0" width="1" height="1"/><rect x="108" y="4" width="1" height="1"/><rect x="110" y="2" width="1" height="1"/><rect x="112" y="0" width="1" height="1"/><rect x="112" y="4" width="1" height="1"/><rect x="114" y="2" width="1" height="1"/><rect x="116" y="0" width="1" height="1"/><rect x="116" y="4" width="1" height="1"/><rect x="118" y="2" width="1" height="1"/><rect x="120" y="0" width="1" height="1"/><rect x="120" y="4" width="1" height="1"/><rect x="122" y="2" width="1" height="1"/><rect x="124" y="0" width="1" height="1"/><rect x="124" y="4" width="1" height="1"/><rect x="126" y="2" width="1" height="1"/><rect x="128" y="0" width="1" height="1"/><rect x="128" y="4" width="1" height="1"/><rect x="130" y="2" width="1" height="1"/><rect x="132" y="0" width="1" height="1"/><rect x="132" y="4" width="1" height="1"/><rect x="134" y="2" width="1" height="1"/><rect x="136" y="0" width="1" height="1"/><rect x="136" y="4" width="1" height="1"/><rect x="138" y="2" width="1" height="1"/><rect x="140" y="0" width="1" height="1"/><rect x="140" y="4" width="1" height="1"/><rect x="142" y="2" width="1" height="1"/><rect x="144" y="0" width="1" height="1"/><rect x="144" y="4" width="1" height="1"/><rect x="146" y="2" width="1" height="1"/><rect x="148" y="0" width="1" height="1"/><rect x="148" y="4" width="1" height="1"/><rect x="150" y="2" width="1" height="1"/><rect x="152" y="0" width="1" height="1"/><rect x="152" y="4" width="1" height="1"/><rect x="154" y="2" width="1" height="1"/><rect x="156" y="0" width="1" height="1"/><rect x="156" y="4" width="1" height="1"/><rect x="158" y="2" width="1" height="1"/><rect x="160" y="0" width="1" height="1"/><rect x="160" y="4" width="1" height="1"/><rect x="162" y="2" width="1" height="1"/><rect x="164" y="0" width="1" height="1"/><rect x="164" y="4" width="1" height="1"/><rect x="166" y="2" width="1" height="1"/><rect x="168" y="0" width="1" height="1"/><rect x="168" y="4" width="1" height="1"/><rect x="170" y="2" width="1" height="1"/><rect x="172" y="0" width="1" height="1"/><rect x="172" y="4" width="1" height="1"/><rect x="174" y="2" width="1" height="1"/><rect x="176" y="0" width="1" height="1"/><rect x="176" y="4" width="1" height="1"/><rect x="178" y="2" width="1" height="1"/><rect x="180" y="0" width="1" height="1"/><rect x="180" y="4" width="1" height="1"/><rect x="182" y="2" width="1" height="1"/><rect x="184" y="0" width="1" height="1"/><rect x="184" y="4" width="1" height="1"/><rect x="186" y="2" width="1" height="1"/><rect x="188" y="0" width="1" height="1"/><rect x="188" y="4" width="1" height="1"/><rect x="190" y="2" width="1" height="1"/><rect x="192" y="0" width="1" height="1"/><rect x="192" y="4" width="1" height="1"/><rect x="194" y="2" width="1" height="1"/><rect x="196" y="0" width="1" height="1"/><rect x="196" y="4" width="1" height="1"/><rect x="198" y="2" width="1" height="1"/><rect x="200" y="0" width="1" height="1"/><rect x="200" y="4" width="1" height="1"/><rect x="202" y="2" width="1" height="1"/><rect x="204" y="0" width="1" height="1"/><rect x="204" y="4" width="1" height="1"/><rect x="206" y="2" width="1" height="1"/><rect x="208" y="0" width="1" height="1"/><rect x="208" y="4" width="1" height="1"/><rect x="210" y="2" width="1" height="1"/><rect x="212" y="0" width="1" height="1"/><rect x="212" y="4" width="1" height="1"/><rect x="214" y="2" width="1" height="1"/><rect x="216" y="0" width="1" height="1"/><rect x="216" y="4" width="1" height="1"/><rect x="218" y="2" width="1" height="1"/><rect x="220" y="0" width="1" height="1"/><rect x="220" y="4" width="1" height="1"/><rect x="222" y="2" width="1" height="1"/><rect x="224" y="0" width="1" height="1"/><rect x="224" y="4" width="1" height="1"/><rect x="226" y="2" width="1" height="1"/><rect x="228" y="0" width="1" height="1"/><rect x="228" y="4" width="1" height="1"/><rect x="230" y="2" width="1" height="1"/><rect x="232" y="0" width="1" height="1"/><rect x="232" y="4" width="1" height="1"/><rect x="234" y="2" width="1" height="1"/><rect x="236" y="0" width="1" height="1"/><rect x="236" y="4" width="1" height="1"/><rect x="238" y="2" width="1" height="1"/><rect x="240" y="0" width="1" height="1"/><rect x="240" y="4" width="1" height="1"/><rect x="242" y="2" width="1" height="1"/><rect x="244" y="0" width="1" height="1"/><rect x="244" y="4" width="1" height="1"/><rect x="246" y="2" width="1" height="1"/><rect x="248" y="0" width="1" height="1"/><rect x="248" y="4" width="1" height="1"/><rect x="250" y="2" width="1" height="1"/><rect x="252" y="0" width="1" height="1"/><rect x="252" y="4" width="1" height="1"/><rect x="254" y="2" width="1" height="1"/><rect x="256" y="0" width="1" height="1"/><rect x="256" y="4" width="1" height="1"/><rect x="258" y="2" width="1" height="1"/><rect x="260" y="0" width="1" height="1"/><rect x="260" y="4" width="1" height="1"/><rect x="262" y="2" width="1" height="1"/><rect x="264" y="0" width="1" height="1"/><rect x="264" y="4" width="1" height="1"/><rect x="266" y="2" width="1" height="1"/><rect x="268" y="0" width="1" height="1"/><rect x="268" y="4" width="1" height="1"/><rect x="270" y="2" width="1" height="1"/><rect x="272" y="0" width="1" height="1"/><rect x="272" y="4" width="1" height="1"/><rect x="274" y="2" width="1" height="1"/><rect x="276" y="0" width="1" height="1"/><rect x="276" y="4" width="1" height="1"/><rect x="278" y="2" width="1" height="1"/><rect x="280" y="0" width="1" height="1"/><rect x="280" y="4" width="1" height="1"/><rect x="282" y="2" width="1" height="1"/><rect x="284" y="0" width="1" height="1"/><rect x="284" y="4" width="1" height="1"/><rect x="286" y="2" width="1" height="1"/><rect x="288" y="0" width="1" height="1"/><rect x="288" y="4" width="1" height="1"/><rect x="290" y="2" width="1" height="1"/><rect x="292" y="0" width="1" height="1"/><rect x="292" y="4" width="1" height="1"/><rect x="294" y="2" width="1" height="1"/><rect x="296" y="0" width="1" height="1"/><rect x="296" y="4" width="1" height="1"/><rect x="298" y="2" width="1" height="1"/><rect x="300" y="0" width="1" height="1"/><rect x="300" y="4" width="1" height="1"/><rect x="302" y="2" width="1" height="1"/><rect x="304" y="0" width="1" height="1"/><rect x="304" y="4" width="1" height="1"/><rect x="306" y="2" width="1" height="1"/><rect x="308" y="0" width="1" height="1"/><rect x="308" y="4" width="1" height="1"/><rect x="310" y="2" width="1" height="1"/><rect x="312" y="0" width="1" height="1"/><rect x="312" y="4" width="1" height="1"/><rect x="314" y="2" width="1" height="1"/><rect x="316" y="0" width="1" height="1"/><rect x="316" y="4" width="1" height="1"/><rect x="318" y="2" width="1" height="1"/><rect x="320" y="0" width="1" height="1"/><rect x="320" y="4" width="1" height="1"/><rect x="322" y="2" width="1" height="1"/><rect x="324" y="0" width="1" height="1"/><rect x="324" y="4" width="1" height="1"/><rect x="326" y="2" width="1" height="1"/><rect x="328" y="0" width="1" height="1"/><rect x="328" y="4" width="1" height="1"/><rect x="330" y="2" width="1" height="1"/><rect x="332" y="0" width="1" height="1"/><rect x="332" y="4" width="1" height="1"/><rect x="334" y="2" width="1" height="1"/><rect x="336" y="0" width="1" height="1"/><rect x="336" y="4" width="1" height="1"/><rect x="338" y="2" width="1" height="1"/><rect x="340" y="0" width="1" height="1"/><rect x="340" y="4" width="1" height="1"/><rect x="342" y="2" width="1" height="1"/><rect x="344" y="0" width="1" height="1"/><rect x="344" y="4" width="1" height="1"/><rect x="346" y="2" width="1" height="1"/><rect x="348" y="0" width="1" height="1"/><rect x="348" y="4" width="1" height="1"/><rect x="350" y="2" width="1" height="1"/><rect x="352" y="0" width="1" height="1"/><rect x="352" y="4" width="1" height="1"/><rect x="354" y="2" width="1" height="1"/><rect x="356" y="0" width="1" height="1"/><rect x="356" y="4" width="1" height="1"/><rect x="358" y="2" width="1" height="1"/><rect x="360" y="0" width="1" height="1"/><rect x="360" y="4" width="1" height="1"/><rect x="362" y="2" width="1" height="1"/><rect x="364" y="0" width="1" height="1"/><rect x="364" y="4" width="1" height="1"/><rect x="366" y="2" width="1" height="1"/></g></svg>
<svg class="b" style="left:1312px;top:98px" width="10" height="6" viewBox="0 0 10 6"><path d="M0.500 0.500h9l-4.500 5z" fill="#cfe4f5"/></svg>
<svg class="b" style="left:1328px;top:93px" width="10" height="12" viewBox="0 0 10 12"><path d="M2.500 1.500h5M3.500 1.500v5.500M6.500 1.500v5.500M1 7.500h8M5 7.500v4" stroke="#e8f2fb" stroke-width="1.200" fill="none"/><path d="M6 2v5" stroke="#e8f2fb" stroke-width="1.600"/></svg>
<svg class="b" style="left:1344px;top:94px" width="10" height="10" viewBox="0 0 10 10"><path d="M1 1l8 8M9 1l-8 8" stroke="#e8f2fb" stroke-width="1.300"/></svg>
<div class="b" style="left:906px;top:115px;width:448px;height:95px;background:#252526;border:1px solid #4a4a4e;box-sizing:border-box;"></div>
<div class="b" style="left:901px;top:210px;width:458px;height:5px;background:#1e1e1e;"></div>
<div class="b" style="left:906px;top:215px;width:448px;height:418px;background:#252526;border:1px solid #4a4a4e;box-sizing:border-box;"></div>
<div class="b" style="left:907px;top:217px;width:445px;height:397px;overflow:hidden;"><div class="b" style="left:1px;top:51px;width:445px;height:17px;background:#1f3f54;border:1px solid #2b95dc;box-sizing:border-box"></div><div class="lg" style="left:2px;top:1px;letter-spacing:0.026px">extract</div><div class="lg" style="left:2px;top:18px;letter-spacing:0.057px">merge</div><div class="lg" style="left:2px;top:35px;letter-spacing:-0.239px">desugar</div><div class="lg" style="left:2px;top:52px;letter-spacing:-0.087px">Exception in thread "main" java.lang.IllegalStateException: Expected a load for Lcom/google/devtools</div><div class="lg" style="left:50px;top:69px;letter-spacing:-0.060px">at com.google.common.base.Preconditions.checkState(Preconditions.java:588)</div><div class="lg" style="left:50px;top:86px;letter-spacing:-0.006px">at com.google.devtools.build.android.desugar.LambdaDesugaring$InvokedynamicRewriter</div><div class="lg" style="left:50px;top:103px;letter-spacing:-0.006px">at com.google.devtools.build.android.desugar.LambdaDesugaring$InvokedynamicRewriter</div><div class="lg" style="left:50px;top:120px;letter-spacing:-0.291px">at org.objectweb.asm.ClassReader.readCode(ClassReader.java:2235)</div><div class="lg" style="left:50px;top:137px;letter-spacing:-0.242px">at org.objectweb.asm.ClassReader.readMethod(ClassReader.java:1275)</div><div class="lg" style="left:50px;top:154px;letter-spacing:-0.270px">at org.objectweb.asm.ClassReader.accept(ClassReader.java:679)</div><div class="lg" style="left:50px;top:171px;letter-spacing:-0.270px">at org.objectweb.asm.ClassReader.accept(ClassReader.java:391)</div><div class="lg" style="left:50px;top:188px;letter-spacing:-0.129px">at com.google.devtools.build.android.desugar.Desugar.desugarClassesInInput(Desugar.java:477)</div><div class="lg" style="left:50px;top:205px;letter-spacing:-0.038px">at com.google.devtools.build.android.desugar.Desugar.desugarOneInput(Desugar.java:361)</div><div class="lg" style="left:50px;top:222px;letter-spacing:-0.082px">at com.google.devtools.build.android.desugar.Desugar.desugar(Desugar.java:314)</div><div class="lg" style="left:50px;top:239px;letter-spacing:-0.046px">at com.google.devtools.build.android.desugar.Desugar.main(Desugar.java:938)</div><div class="lg" style="left:2px;top:256px;letter-spacing:-1.688px">1</div></div>
<div class="b" style="left:908px;top:614px;width:444px;height:17px;background:#333337;"></div>
<div class="b" style="left:908px;top:615px;width:16px;height:16px;background:#3a3a3e;"></div>
<svg class="b" style="left:913px;top:618px" width="6" height="10" viewBox="0 0 6 10"><path d="M5.500 0.500v8l-4.500-4z" fill="#999"/></svg>
<div class="b" style="left:926px;top:615px;width:165px;height:16px;background:#3e3e42;"></div>
<svg class="b" style="left:1004px;top:619px" width="9" height="8" viewBox="0 0 9 8"><path d="M1.500 0.500v7M3.500 0.500v7M5.500 0.500v7M7.500 0.500v7" stroke="#6a6a6e" stroke-width="1"/></svg>
<div class="b" style="left:1336px;top:615px;width:16px;height:16px;background:#3a3a3e;"></div>
<svg class="b" style="left:1341px;top:618px" width="6" height="10" viewBox="0 0 6 10"><path d="M0.500 0.500v8l4.500-4z" fill="#999"/></svg>
<div class="b" style="left:911px;top:648px;width:65px;height:21px;background:#3f3f46;border:1px solid #555558;box-sizing:border-box;"></div>
<div class="t" style="left:914.50px;top:650.70px;height:16px;line-height:16px;font:normal normal 12px/16px 'Liberation Sans', sans-serif;color:#f1f1f1;letter-spacing:-0.349px;">Kill Process</div>
<div class="b" style="left:986px;top:648px;width:33px;height:21px;background:#3f3f46;border:1px solid #555558;box-sizing:border-box;"></div>
<div class="t" style="left:989.50px;top:650.70px;height:16px;line-height:16px;font:normal normal 12px/16px 'Liberation Sans', sans-serif;color:#f1f1f1;letter-spacing:-0.438px;">Clear</div>
<div class="b" style="left:900px;top:679px;width:460px;height:1px;background:#3f3f46;"></div>
<div class="b" style="left:1060px;top:679px;width:58px;height:21px;background:#252526;border:1px solid #3f3f46;box-sizing:border-box;border-top:none;"></div>
<svg class="b" style="left:905px;top:681px" width="18" height="15" viewBox="0 0 18 15"><path d="M1.700 1.700h6l1.300 1 1.300-1h6v10.600h-6l-1.300 1-1.300-1h-6z" fill="#f6f6f6" stroke="#ffffff" stroke-width="1.400" stroke-linejoin="round"/><path d="M9 2.800v9.800" stroke="#2d2d30" stroke-width="1.500"/></svg>
<div class="t" style="left:927.00px;top:681.30px;height:16px;line-height:16px;font:normal normal 12px/16px 'Liberation Sans', sans-serif;color:#f1f1f1;letter-spacing:-0.276px;">Librarie...</div>
<svg class="b" style="left:987px;top:682px" width="17" height="14" viewBox="0 0 17 14"><path d="M1.500 2.500h5l1.500-1.500h7.500v12h-14z" fill="#dcb67a" stroke="#f7efe0" stroke-width="1"/><path d="M1.500 4.500h14" stroke="#c9a062" stroke-width="0.800"/></svg>
<div class="t" style="left:1008.50px;top:681.30px;height:16px;line-height:16px;font:normal normal 12px/16px 'Liberation Sans', sans-serif;color:#f1f1f1;letter-spacing:-0.317px;">Files M...</div>
<svg class="b" style="left:1065px;top:681px" width="18" height="16" viewBox="0 0 18 16"><path d="M1.500 1.500h14v3.500h-14zM1.500 5h9v3.500h-9zM1.500 8.500h12v3.500h-12zM1.500 12h7v3h-7z" fill="#252526" stroke="#ffffff" stroke-width="1.700"/></svg>
<div class="t" style="left:1087.50px;top:681.30px;height:16px;line-height:16px;font:normal normal 12px/16px 'Liberation Sans', sans-serif;color:#1c97ea;letter-spacing:-0.383px;">Logs</div>
<svg class="b" style="left:1125px;top:682px" width="14" height="14" viewBox="0 0 14 14"><path d="M1.500 1.500h11v11h-11zM1.500 6.500h11M7 1.500v5" fill="none" stroke="#f1f1f1" stroke-width="1.300"/><rect x="2" y="7" width="10" height="5" fill="#4a4a4e"/></svg>
<div class="t" style="left:1145.00px;top:681.30px;height:16px;line-height:16px;font:normal normal 12px/16px 'Liberation Sans', sans-serif;color:#f1f1f1;letter-spacing:0.138px;">Modu...</div>
<svg class="b" style="left:1200px;top:681px" width="17" height="16" viewBox="0 0 17 16"><circle cx="10.500" cy="6" r="4.600" fill="none" stroke="#f1f1f1" stroke-width="1.500"/><circle cx="10.500" cy="6" r="2" fill="#e8e8e8"/><path d="M7 9.500L2 14.500" stroke="#f1f1f1" stroke-width="2.400" stroke-linecap="round"/><path d="M7 9.500L2 14.500" stroke="#2d2d30" stroke-width="0.800"/></svg>
<div class="t" style="left:1221.50px;top:681.30px;height:16px;line-height:16px;font:normal normal 12px/16px 'Liberation Sans', sans-serif;color:#f1f1f1;letter-spacing:-0.273px;">Quick...</div>
<svg class="b" style="left:1279px;top:682px" width="16" height="15" viewBox="0 0 16 15"><path d="M3.500 1.500h5.500v5.500h-5.500zM9 1.500h5.500v5.500h-5.500z" fill="none" stroke="#f1f1f1" stroke-width="1.200"/><circle cx="6.500" cy="9" r="2.600" fill="#2d2d30" stroke="#3a8ee6" stroke-width="1.400"/><path d="M4.500 11L1.500 14" stroke="#3a8ee6" stroke-width="1.600"/></svg>
<div class="t" style="left:1300.50px;top:681.30px;height:16px;line-height:16px;font:normal normal 12px/16px 'Liberation Sans', sans-serif;color:#f1f1f1;letter-spacing:-0.214px;">Find All...</div>
<div class="b" style="left:0px;top:706px;width:1366px;height:22px;background:#007acc;"></div>
<div class="t" style="left:11.00px;top:710.20px;height:16px;line-height:16px;font:normal normal 12px/16px 'Liberation Sans', sans-serif;color:#ffffff;letter-spacing:-0.219px;">B4J-Bridge: Disconnected</div>
<div class="t" style="left:164.00px;top:710.20px;height:16px;line-height:16px;font:normal normal 12px/16px 'Liberation Sans', sans-serif;color:#ffffff;letter-spacing:-0.305px;">2/23/2021 3:10:15 PM</div>
<div class="t" style="left:286.00px;top:710.20px;height:16px;line-height:16px;font:normal normal 12px/16px 'Liberation Sans', sans-serif;color:#ffffff;letter-spacing:-0.503px;">File Saved.</div>
<div class="t" style="left:360.50px;top:710.20px;height:16px;line-height:16px;font:normal bold 12px/16px 'Liberation Sans', sans-serif;color:#ffffff;letter-spacing:-0.255px;text-decoration:underline;">B4J v8.90 is available for download</div>
<div class="b" style="left:0px;top:728px;width:1366px;height:40px;background:linear-gradient(90deg,#22333c 0%,#20303b 55%,#1c2a3a 70%,#18243a 82%,#16213a 100%);"></div>
<div class="b" style="left:784px;top:728px;width:48px;height:40px;background:#47535c;"></div>
<div class="b" style="left:200px;top:766px;width:40px;height:2px;background:#76b9ed;"></div>
<div class="b" style="left:298px;top:766px;width:37px;height:2px;background:#76b9ed;"></div>
<div class="b" style="left:348px;top:766px;width:39px;height:2px;background:#76b9ed;"></div>
<div class="b" style="left:396px;top:766px;width:40px;height:2px;background:#76b9ed;"></div>
<div class="b" style="left:690px;top:766px;width:40px;height:2px;background:#76b9ed;"></div>
<div class="b" style="left:739px;top:766px;width:40px;height:2px;background:#76b9ed;"></div>
<div class="b" style="left:784px;top:766px;width:48px;height:2px;background:#76b9ed;"></div>
<div class="b" style="left:837px;top:766px;width:40px;height:2px;background:#76b9ed;"></div>
<div class="b" style="left:886px;top:766px;width:40px;height:2px;background:#76b9ed;"></div>
<div class="b" style="left:935px;top:766px;width:40px;height:2px;background:#76b9ed;"></div>
<div class="b" style="left:984px;top:766px;width:40px;height:2px;background:#76b9ed;"></div>
<div class="b" style="left:335px;top:766px;width:3px;height:2px;background:#5a8fb8;"></div>
<svg class="b" style="left:16px;top:740px" width="17" height="17" viewBox="0 0 17 17"><path d="M0 2.400L6.800 1.400V8H0zM7.700 1.300L16.500 0V8H7.700zM0 8.900h6.800v6.600L0 14.500zM7.700 8.900h8.800v8L7.700 15.700z" fill="#ffffff"/></svg>
<svg class="b" style="left:62px;top:739px" width="19" height="19" viewBox="0 0 19 19"><circle cx="11.800" cy="7.300" r="5.800" fill="none" stroke="#fff" stroke-width="1.200"/><path d="M7.700 11.500L1.700 17.500" stroke="#fff" stroke-width="1.400"/></svg>
<svg class="b" style="left:110px;top:739px" width="20" height="18" viewBox="0 0 20 18"><path d="M3.500 5.500h9v6.500h-9z" fill="none" stroke="#fff" stroke-width="1.100"/><path d="M2 4v-2h12v2M2 13.500v2h12v-2" fill="none" stroke="#fff" stroke-width="1.100"/><path d="M16.800 1.500v2.200M16.800 5.500v10.500" stroke="#fff" stroke-width="1.400"/></svg>
<svg class="b" style="left:159px;top:736px" width="24" height="24" viewBox="0 0 24 24"><circle cx="12" cy="12" r="11" fill="#e94335"/><path d="M12 12L2.500 6.500A11 11 0 0 0 8 22.300z" fill="#34a853"/><path d="M12 12L8 22.300A11 11 0 0 0 22.400 8.500H12z" fill="#fbbc05"/><path d="M12 12L2.500 6.500A11 11 0 0 1 22.400 8.500H12z" fill="#e94335"/><circle cx="12" cy="12" r="5.200" fill="#fff"/><circle cx="12" cy="12" r="4.100" fill="#4f8df5"/></svg>
<svg class="b" style="left:208px;top:735px" width="25" height="25" viewBox="0 0 25 25"><circle cx="12.500" cy="13.800" r="10.600" fill="#ff5a36"/><path d="M3 9.500c1-3 2.500-4.500 3.500-5 0 1.500.5 2.500 1.500 3C9.500 4 12 2 14.500 1c-.5 2 1 3.500 3 5 3 2 5.500 5 4.500 10-1 4-4.500 7.800-9.500 7.800S2 19.500 2 14c0-2 .5-3.500 1-4.500z" fill="#ff8a1f"/><path d="M14.500 1c-.5 2 1 3.500 3 5 2.500 2 4.500 4.500 4.500 8-1-3-3-4.500-4.500-6.500-1.500-2-3-4-3-6.500z" fill="#ffd23d"/><path d="M6.500 4.500c0 1.500.5 2.500 1.500 3 1.500 0 3 .5 4 1.500-2.500 0-4 1-4.500 2.500-1-.5-2.500-.5-3.500 0 0-2.500 1-5 2.500-7z" fill="#ffb02e"/><circle cx="13.500" cy="13.500" r="4.600" fill="#7a3bd2"/><path d="M9.500 12c1-2 3-3 5.500-2.500-1 .5-1.500 1.300-1 2.300 1.300.4 2.500.2 3.500-.5.800 3.500-1.200 6.200-4.200 6.200s-4.500-2.500-3.800-5.500z" fill="#a94be0"/><path d="M2.200 13c.5 5.500 4.500 9.800 10 10.500-4.500-1-7-4.500-7-8.500 0-1.500.5-3 1.500-4-2 0-3.500.5-4.500 2z" fill="#ff2f54"/></svg>
<svg class="b" style="left:257px;top:736px" width="24" height="24" viewBox="0 0 24 24"><path d="M1 7.500h22v13.500a2 2 0 0 1-2 2h-18a2 2 0 0 1-2-2z" fill="#ffffff"/><path d="M7.500 7.500c0-8 9-8 9 0" fill="none" stroke="#ffffff" stroke-width="1.500"/><rect x="7" y="10.500" width="4.500" height="4.500" fill="#f25022"/><rect x="12.500" y="10.500" width="4.500" height="4.500" fill="#7fba00"/><rect x="7" y="16" width="4.500" height="4.500" fill="#00a4ef"/><rect x="12.500" y="16" width="4.500" height="4.500" fill="#ffb900"/></svg>
<svg class="b" style="left:305px;top:738px" width="25" height="20" viewBox="0 0 25 20"><path d="M1.500 2a1 1 0 0 1 1-1h7l2 2.500h11a1 1 0 0 1 1 1v13.500h-22z" fill="#f4c542"/><path d="M1.500 6h22v12.500h-22z" fill="#ffe08a"/><path d="M1.500 9h22v9.500h-22z" fill="#f9d262"/><path d="M7 12.500h11v7h-11z" fill="#3a8fdc"/><path d="M9.500 15.500h6v4h-6z" fill="#1f2e38"/></svg>
<div class="b" style="left:355px;top:736px;width:24px;height:24px;background:#ffffff;"></div>
<div class="t" style="left:356.50px;top:742.50px;height:12px;line-height:12px;font:normal normal 11px/12px 'Liberation Sans', sans-serif;color:#4fd0cc;letter-spacing:0.068px;">B4A</div>
<svg class="b" style="left:404px;top:736px" width="24" height="24" viewBox="0 0 24 24"><circle cx="12" cy="10.800" r="9.600" fill="#3ddc84"/><path d="M12 7.500L6.500 22M12 7.500L17.500 22M8.500 16.500h7" stroke="#e8eef2" stroke-width="2" fill="none"/><rect x="9.300" y="5" width="5.400" height="8" rx="1.200" fill="#27323c"/><circle cx="12" cy="10" r="1.300" fill="#e8eef2"/><path d="M11 3.500h2v2h-2z" fill="#27323c"/></svg>
<div class="b" style="left:454px;top:737px;width:21px;height:20px;background:#2a1400;border:1.500px solid #ff7c00;box-sizing:border-box;"></div>
<div class="t" style="left:458.30px;top:740.00px;height:14px;line-height:14px;font:normal normal 13px/14px 'Liberation Sans', sans-serif;color:#ff9a1c;letter-spacing:0.469px;">Ai</div>
<div class="b" style="left:503px;top:737px;width:21px;height:20px;background:#001c26;border:1.500px solid #00c8ff;box-sizing:border-box;"></div>
<div class="t" style="left:506.80px;top:740.00px;height:14px;line-height:14px;font:normal normal 13px/14px 'Liberation Sans', sans-serif;color:#2fd0ff;letter-spacing:-0.586px;">Ps</div>
<div class="b" style="left:552px;top:737px;width:21px;height:20px;background:#001e36;border-radius:4px;"></div>
<div class="t" style="left:555.50px;top:740.00px;height:14px;line-height:14px;font:normal bold 12px/14px 'Liberation Sans', sans-serif;color:#31a8ff;letter-spacing:-0.344px;">Ps</div>
<svg class="b" style="left:602px;top:735px" width="20" height="26" viewBox="0 0 20 26"><rect x="1" y="1" width="18" height="24" fill="#ffffff"/><rect x="3.500" y="3.500" width="13" height="3.600" fill="#1f2e38"/><path d="M4.0 10.5h2.800l-1 2.600h-1.800z" fill="#1f2e38"/><path d="M8.6 10.5h2.800l-1 2.600h-1.800z" fill="#1f2e38"/><path d="M13.2 10.5h2.800l-1 2.600h-1.800z" fill="#1f2e38"/><path d="M4.0 15.1h2.800l-1 2.600h-1.800z" fill="#1f2e38"/><path d="M8.6 15.1h2.800l-1 2.600h-1.800z" fill="#1f2e38"/><path d="M13.2 15.1h2.800l-1 2.600h-1.800z" fill="#1f2e38"/><path d="M4.0 19.7h2.800l-1 2.600h-1.800z" fill="#1f2e38"/><path d="M8.6 19.7h2.800l-1 2.600h-1.800z" fill="#1f2e38"/><path d="M13.2 19.7h2.800l-1 2.600h-1.800z" fill="#1f2e38"/></svg>
<svg class="b" style="left:649px;top:734px" width="24" height="26" viewBox="0 0 24 26"><path d="M1.500 2.500c7 0 14 0 21 0 0 11-2 18-10.500 22.500C3.500 20.500 1.500 13.500 1.500 2.500z" fill="#3b8fe4"/><circle cx="12" cy="11.500" r="5.300" fill="none" stroke="#8fd0ff" stroke-width="1.700"/><path d="M14 6.500a5.300 5.300 0 1 0 0 10" fill="none" stroke="#1f55b0" stroke-width="1.700"/><path d="M9 7a5.300 5.300 0 0 1 7 .5" fill="none" stroke="#f5c842" stroke-width="1.200"/></svg>
<svg class="b" style="left:697.5px;top:734px" width="28" height="28" viewBox="0 0 28 28"><circle cx="12" cy="12" r="11" fill="#2ca5e0"/><path d="M5 12l12.500-5-2.200 11-4-3-2 2-.3-3.300 6-5.500-7.500 4.600z" fill="#ffffff"/><rect x="11.500" y="16" width="16" height="11.500" rx="2" fill="#e53935"/></svg>
<div class="t" style="left:710.50px;top:751.00px;height:10px;line-height:10px;font:normal bold 9px/10px 'Liberation Sans', sans-serif;color:#ffffff;letter-spacing:0.161px;">.95</div>
<svg class="b" style="left:747px;top:736px" width="24" height="24" viewBox="0 0 24 24"><rect x="1" y="1" width="22" height="22" rx="2.500" fill="#f2f2fa" stroke="#2b2fa8" stroke-width="1.600"/><circle cx="7.300" cy="7" r="4.200" fill="#e8141c"/><circle cx="16.700" cy="7" r="4.200" fill="#1648d0"/><circle cx="7.300" cy="17" r="4.200" fill="#58c040"/><circle cx="16.700" cy="17" r="4.200" fill="#f08a24"/><path d="M5 5.500a3 2 0 0 1 4.500 0M14.500 5.500a3 2 0 0 1 4.500 0M5 15.500a3 2 0 0 1 4.500 0M14.500 15.500a3 2 0 0 1 4.500 0" stroke="#ffffff" stroke-opacity="0.450" stroke-width="1.200" fill="none"/></svg>
<div class="b" style="left:796px;top:736px;width:24px;height:24px;background:#ffffff;"></div>
<div class="t" style="left:798.50px;top:742.50px;height:12px;line-height:12px;font:normal normal 11px/12px 'Liberation Sans', sans-serif;color:#f06ab8;letter-spacing:0.010px;">B4J</div>
<svg class="b" style="left:846px;top:736px" width="22" height="24" viewBox="0 0 22 24"><path d="M9 4C7 10 3 13 2 17C2 21 7 23 12 22C18 21 21 16 19.500 4C18 8 17 10 16 11C16 8 15.500 6 15 5C14 8 12.500 11 11.500 12C11 9 10 6 9 4z" fill="#2f8fd0"/><path d="M2 16C2 21 7 23.500 12 22C16 21 18 18 18 15C16 17 13 18 10 16C7.500 14 7 10 9 4C6 9 2.500 12 2 16z" fill="#1fd0f4"/></svg>
<svg class="b" style="left:892px;top:736px" width="28" height="24" viewBox="0 0 28 24"><path d="M3 6.500l4-1v10l-4 1.500z" fill="#aeb8c0" stroke="#8a949c" stroke-width="0.600"/><path d="M6.500 3.500l18.500-2v14l-18.500 2.500z" fill="#d4dbe1" stroke="#9aa6b0" stroke-width="0.800"/><path d="M8.500 5.300l14.800-1.600v10.300l-14.800 2z" fill="#eaf4fc"/><path d="M9 12.500l2.500-.5 1.500-5 1.800 6 1.500-3.500 1.700 3 1.200-4 1.300 3 2.300-.5" fill="none" stroke="#3f8ad0" stroke-width="1"/><ellipse cx="16.500" cy="20.500" rx="5.800" ry="2.300" fill="#dfe4e8" stroke="#a8b0b8" stroke-width="0.600"/><path d="M14.500 17.500h4l.5 2.500h-5z" fill="#b9c2ca"/></svg>
<svg class="b" style="left:942px;top:736px" width="26" height="24" viewBox="0 0 26 24"><rect x="1" y="1" width="24.500" height="7" rx="1" fill="#b01040"/><rect x="1" y="8.500" width="24.500" height="6.800" rx="1" fill="#4a48b0"/><rect x="1" y="15.800" width="24.500" height="6.800" rx="1" fill="#1c7c3c"/><path d="M3.500 1v6.800M3.500 8.700v6.400M3.500 16v6.400" stroke="#f0c020" stroke-width="1.500"/><rect x="9" y="0.500" width="8.500" height="22.500" fill="#e8881c"/><path d="M9 0.500h8.500v22.500" fill="none" stroke="#c86a10" stroke-width="0.800"/><path d="M11 2.500l2.200-2 2.200 2v3h-4.400z" fill="#f8b830"/><rect x="9.500" y="10.500" width="7.500" height="5" fill="#f4f4f4" stroke="#5a3a10" stroke-width="0.700"/><rect x="11.800" y="11.500" width="3" height="4" fill="#6b4a1c"/><rect x="11.800" y="6.500" width="3" height="2.500" fill="#7a4a10"/></svg>
<svg class="b" style="left:990px;top:735px" width="28" height="26" viewBox="0 0 28 26"><circle cx="16.800" cy="8.500" r="8" fill="#2f7fd8"/><path d="M11 5c2-3 6-4 9-2-1 2-3 2-4 4s-3 1-3 3-2 1-3-1 0-3 1-4z" fill="#9ac830"/><path d="M18 10c2-1 4 0 5 1-1 3-3 4-5 4-1-2-1-4 0-5z" fill="#6ab040"/><ellipse cx="10" cy="14.500" rx="8" ry="6.500" fill="none" stroke="#e03828" stroke-width="1.500" transform="rotate(-20 10 14.500)"/><ellipse cx="10" cy="14.500" rx="6.600" ry="5.200" fill="none" stroke="#f0c020" stroke-width="1.500" transform="rotate(-20 10 14.500)"/><ellipse cx="10" cy="14.500" rx="5.200" ry="3.900" fill="none" stroke="#30a840" stroke-width="1.500" transform="rotate(-20 10 14.500)"/><ellipse cx="10" cy="14.500" rx="3.800" ry="2.600" fill="none" stroke="#2868d0" stroke-width="1.500" transform="rotate(-20 10 14.500)"/><circle cx="16.800" cy="8.500" r="8" fill="#2f7fd8" clip-path="inset(0 0 40% 0)"/><path d="M11 5c2-3 6-4 9-2-1 2-3 2-4 4s-3 1-3 3-2 1-3-1 0-3 1-4z" fill="#9ac830"/><path d="M10.500 12.500l14.500 2.500-11 9 1-7z" fill="#10b020" stroke="#0a7a14" stroke-width="0.600"/></svg>
<svg class="b" style="left:1090px;top:743px" width="14" height="9" viewBox="0 0 14 9"><path d="M1 8l6-6.500 6 6.500" fill="none" stroke="#fff" stroke-width="1.400"/></svg>
<svg class="b" style="left:1112px;top:741px" width="19" height="13" viewBox="0 0 19 13"><path d="M5.500 3.500h11.500v8h-11.500z" fill="none" stroke="#fff" stroke-width="1.200"/><path d="M17.500 6v3" stroke="#fff" stroke-width="1.500"/><path d="M1.500 1.500v3M4.500 1.500v3M0.500 4.500h5v3h-5zM3 7.500v3h3" fill="none" stroke="#fff" stroke-width="1.100"/><rect x="7" y="5" width="4" height="5" fill="#fff"/></svg>
<svg class="b" style="left:1136px;top:740px" width="19" height="16" viewBox="0 0 19 16"><path d="M5.500 2.500h11.500v8.500h-11.500z" fill="none" stroke="#fff" stroke-width="1.200"/><path d="M11.200 11v3.500M7.500 14.500h7.500" stroke="#fff" stroke-width="1.200"/><path d="M1 1.500h5v4h-5zM3.500 5.500v9" fill="#172339" stroke="#fff" stroke-width="1.100"/><path d="M2.200 3.500h2.500" stroke="#fff" stroke-width="1"/></svg>
<svg class="b" style="left:1160px;top:740px" width="20" height="16" viewBox="0 0 20 16"><path d="M1.500 5.500h3l4-4v13l-4-4h-3z" fill="none" stroke="#fff" stroke-width="1.200"/><path d="M11 5.500c1.200 1.500 1.200 3.500 0 5" fill="none" stroke="#fff" stroke-width="1.100"/><path d="M13.500 3.500c2 2.500 2 6.500 0 9" fill="none" stroke="#9aa" stroke-width="1.100"/><path d="M16 1.500c3 3.500 3 9.500 0 13" fill="none" stroke="#667" stroke-width="1.100"/></svg>
<svg class="b" style="left:1184px;top:740px" width="25" height="15" viewBox="0 0 25 15"><rect x="0.700" y="0.700" width="23.500" height="13.500" rx="1" fill="none" stroke="#fff" stroke-width="1.300"/><path d="M3.500 4h18M3.500 7h18" stroke="#fff" stroke-width="1.300" stroke-dasharray="1.300 1.300"/><path d="M6 10.500h13" stroke="#fff" stroke-width="1.300"/></svg>
<div class="t" style="left:1219.00px;top:740.00px;height:16px;line-height:16px;font:normal normal 12px/16px 'Liberation Sans', sans-serif;color:#ffffff;letter-spacing:-1.005px;">ENG</div>
<div class="t" style="left:1260.00px;top:731.00px;height:16px;line-height:16px;font:normal normal 12px/16px 'Liberation Sans', sans-serif;color:#ffffff;letter-spacing:-0.386px;">4:49 PM</div>
<div class="t" style="left:1254.00px;top:749.00px;height:16px;line-height:16px;font:normal normal 12px/16px 'Liberation Sans', sans-serif;color:#ffffff;letter-spacing:-0.155px;">2/23/2021</div>
<svg class="b" style="left:1324px;top:739px" width="26" height="25" viewBox="0 0 26 25"><path d="M1.500 1.500h15v11.500h-8.500l-3.500 3.500v-3.500h-3z" fill="#ffffff"/><path d="M4 5h10M4 7.500h10M4 10h10" stroke="#172339" stroke-width="1"/><circle cx="17.500" cy="16.500" r="6.800" fill="#2a2f38" stroke="#cfd3d8" stroke-width="1"/></svg>
<div class="t" style="left:1338.50px;top:749.50px;height:12px;line-height:12px;font:normal bold 10px/12px 'Liberation Sans', sans-serif;color:#ffffff;letter-spacing:0.438px;">2</div>
<div class="b" style="left:1361px;top:728px;width:1px;height:40px;background:#5a6470;"></div>
</div></body></html>
